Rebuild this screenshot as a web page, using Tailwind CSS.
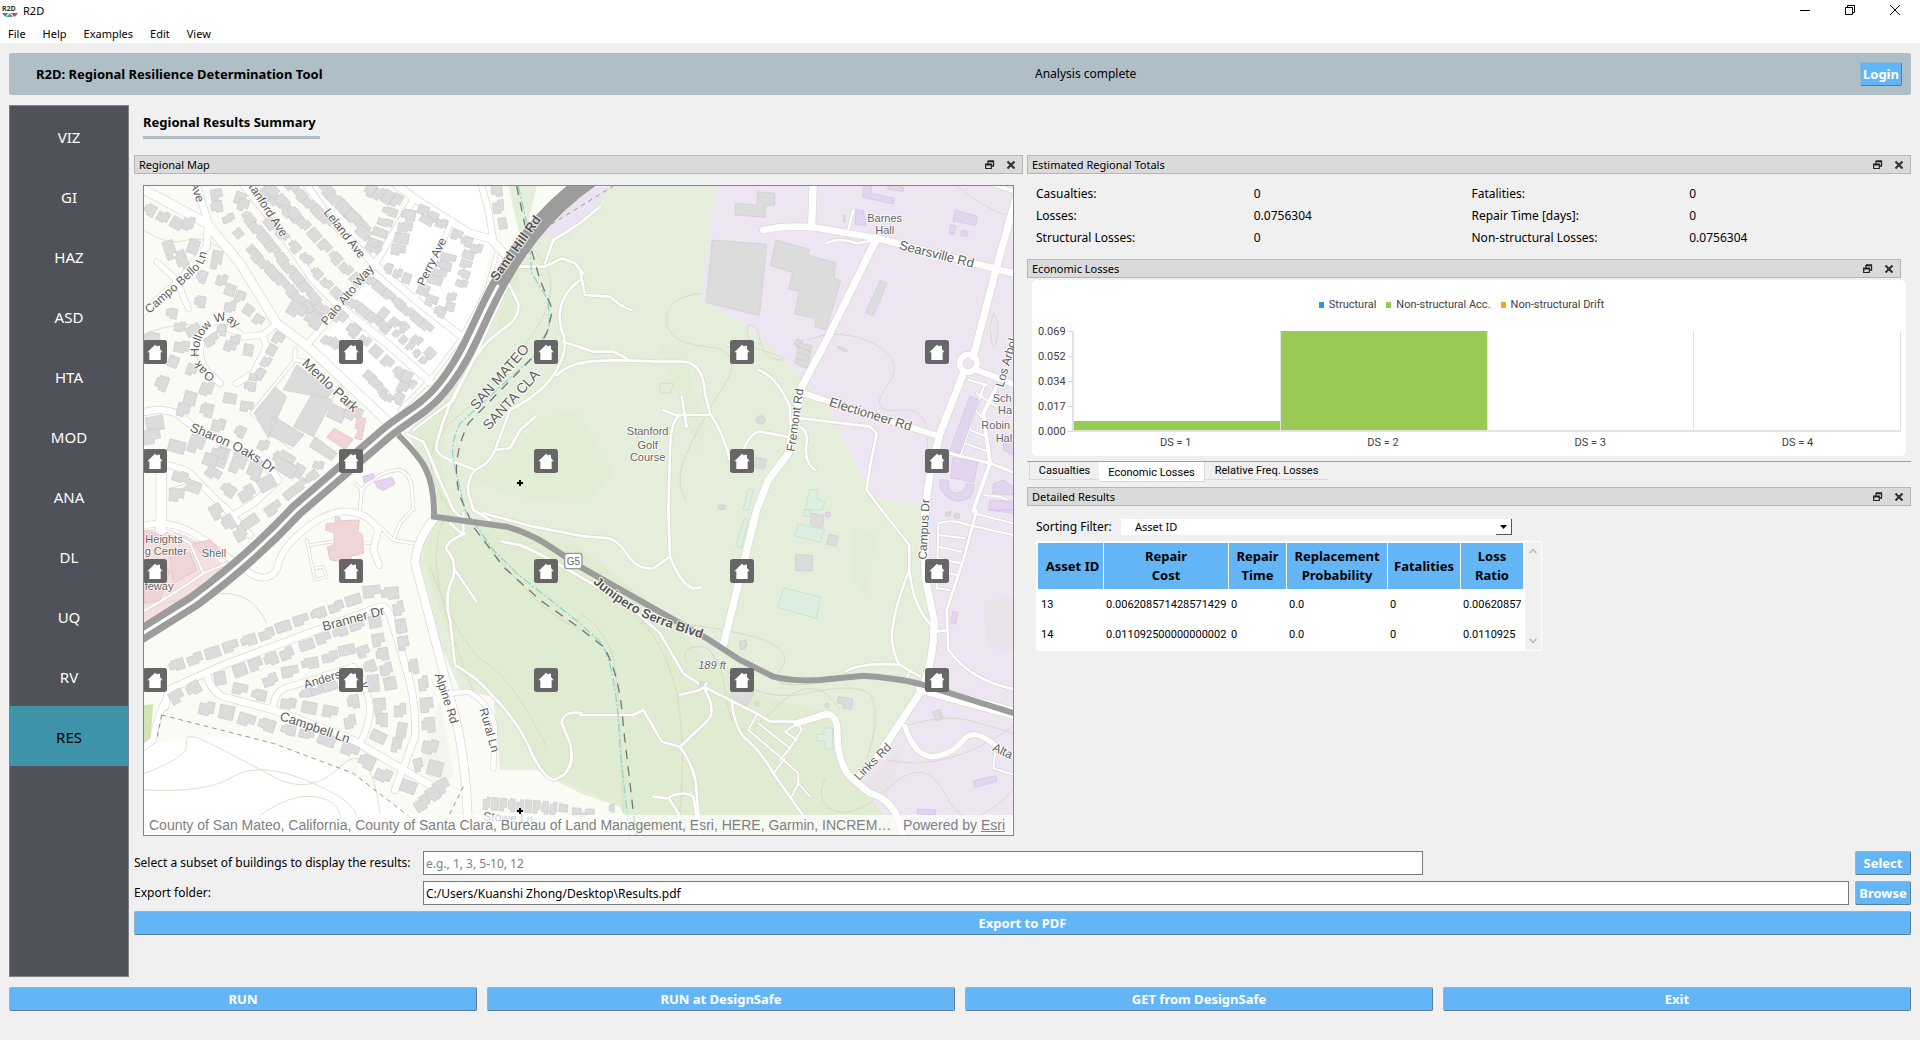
<!DOCTYPE html>
<html lang="en">
<head>
<meta charset="utf-8">
<title>R2D</title>
<script src="https://cdn.jsdelivr.net/npm/@tailwindcss/browser@4"></script>
</head>
<body class="min-h-screen bg-[#f0f0f0] font-['Noto_Sans',sans-serif] text-xs text-black">

<!-- Shared icons -->
<svg class="hidden" aria-hidden="true">
  <symbol id="float" viewBox="0 0 10 10"><path d="M3 4V1.5H8.500V6H6.500M3 1H9" fill="none" stroke="#222" stroke-width="1.300"/><path d="M.7 4.500H6.300V8.500H.7Z" fill="none" stroke="#222" stroke-width="1.200"/><path d="M0 4.500H7" stroke="#222" stroke-width="2"/></symbol>
  <symbol id="close" viewBox="0 0 10 10"><path d="M1.500 1.500 8.500 8.500M8.500 1.500 1.500 8.500" stroke="#333" stroke-width="2.200"/></symbol>
  <symbol id="house" viewBox="0 0 72 72"><rect width="72" height="72" rx="8" fill="#666"/><path d="M13 37 36 14 43 20V17H51V27L59 37H53V60H19V37Z" fill="#fff"/></symbol>
</svg>

<header class="bg-white h-[43px] flex flex-col">
  <div class="flex items-center h-[23px]">
    <svg class="ml-[2px] w-4 h-4" viewBox="0 0 16 16" aria-hidden="true"><text x="0" y="7" font-size="7" font-weight="bold" font-family="Noto Sans" fill="#333">R2D</text><path d="M0 9H6L3.500 13Z" fill="#3f7fc1"/><path d="M4 13 8 9 11 13Z" fill="#4fa79b"/><path d="M9 9H16L12.500 13Z" fill="#c9484b"/></svg>
    <span class="ml-[5px] text-[11px]">R2D</span>
    <div class="ml-auto flex items-start h-full pt-[5px] gap-[35px] pr-[20px]">
      <button aria-label="Minimize" class="w-[10px] h-[10px]"><svg viewBox="0 0 10 10"><path d="M0 5.500H10" stroke="#000"/></svg></button>
      <button aria-label="Restore" class="w-[10px] h-[10px]"><svg viewBox="0 0 10 10"><path d="M.5 2.500H7.500V9.500H.5ZM2.500 2.500V.5H9.500V7.500H7.500" fill="none" stroke="#000"/></svg></button>
      <button aria-label="Close" class="w-[10px] h-[10px]"><svg viewBox="0 0 10 10"><path d="M0 0 10 10M10 0 0 10" stroke="#000"/></svg></button>
    </div>
  </div>
  <nav class="flex items-center h-5 pt-[2px] pl-2 gap-[17px] text-[11px]">
    <a href="#file">File</a><a href="#help">Help</a><a href="#examples">Examples</a><a href="#edit">Edit</a><a href="#view">View</a>
  </nav>
</header>

<div class="px-[9px] pt-[10px]">
  <div class="h-[42px] rounded-xs bg-[#b0bec5] grid grid-cols-[1026fr_876fr] items-center">
    <h1 class="pl-[27px] pt-px text-[13px] font-bold">R2D: Regional Resilience Determination Tool</h1>
    <div class="flex items-center justify-between pr-[9px]">
      <span>Analysis complete</span>
      <button class="h-6 w-[42px] rounded-xs bg-[#64b5f6] border border-t-[#8cb9d0] border-l-[#8cb9d0] border-r-[#5a7f96] border-b-[#5a7f96] text-white font-bold text-[13px] leading-5">Login</button>
    </div>
  </div>

  <div class="flex mt-[10px] gap-[5px]">
    <nav class="w-[120px] shrink-0 bg-[#505259] border border-[#7f818a] text-[15px] text-white">
      <a href="#viz" class="flex h-[60px] pt-[2px] items-center justify-center">VIZ</a>
      <a href="#gi" class="flex h-[60px] pt-[2px] items-center justify-center">GI</a>
      <a href="#haz" class="flex h-[60px] pt-[2px] items-center justify-center">HAZ</a>
      <a href="#asd" class="flex h-[60px] pt-[2px] items-center justify-center">ASD</a>
      <a href="#hta" class="flex h-[60px] pt-[2px] items-center justify-center">HTA</a>
      <a href="#mod" class="flex h-[60px] pt-[2px] items-center justify-center">MOD</a>
      <a href="#ana" class="flex h-[60px] pt-[2px] items-center justify-center">ANA</a>
      <a href="#dl" class="flex h-[60px] pt-[2px] items-center justify-center">DL</a>
      <a href="#uq" class="flex h-[60px] pt-[2px] items-center justify-center">UQ</a>
      <a href="#rv" class="flex h-[60px] pt-[2px] items-center justify-center">RV</a>
      <a href="#res" aria-current="page" class="flex h-[60px] pt-[2px] items-center justify-center bg-[#3f93a9] text-black">RES</a>
    </nav>

    <main class="flex-1 min-w-0 pb-[42px]">
      <h2 class="ml-[9px] mt-2 w-[177px] h-[26px] border-b-[3px] border-[#b0bec5] text-[13px] leading-[18px] font-bold whitespace-nowrap">Regional Results Summary</h2>

      <div class="grid grid-cols-[889fr_884fr] gap-1 mt-4">
        <section>
          <div class="h-[19px] flex items-center border border-[#b5b5b5] bg-[#dadada] pl-1 pr-1.5 text-[11px]">
            <h3 class="pt-px">Regional Map</h3>
            <button aria-label="Float" class="ml-auto w-[10px] h-[10px]"><svg class="size-full"><use href="#float"/></svg></button>
            <button aria-label="Close" class="ml-[11px] w-[10px] h-[10px]"><svg class="size-full"><use href="#close"/></svg></button>
          </div>
          <div class="relative mx-[9px] mt-[11px] border border-[#85858c] overflow-hidden bg-[#fbfaf5]">
            <svg id="map" class="block w-full" viewBox="12 18 2607 1947" preserveAspectRatio="xMidYMid slice" font-family="'Liberation Sans', Arial, sans-serif" role="img" aria-label="Regional map"></svg>
            <div class="absolute inset-x-0 bottom-0 h-5 px-[5px] flex justify-between items-center bg-white/70 font-['Liberation_Sans',sans-serif] text-sm text-[#808080] whitespace-nowrap">
              <span class="truncate">County of San Mateo, California, County of Santa Clara, Bureau of Land Management, Esri, HERE, Garmin, INCREM…</span>
              <span class="pl-2 pr-[3px]">Powered by <a href="#esri" class="underline">Esri</a></span>
            </div>
          </div>
        </section>

        <section>
          <div class="h-[19px] flex items-center border border-[#b5b5b5] bg-[#dadada] pl-1 pr-1.5 text-[11px]">
            <h3 class="pt-px">Estimated Regional Totals</h3>
            <button aria-label="Float" class="ml-auto w-[10px] h-[10px]"><svg class="size-full"><use href="#float"/></svg></button>
            <button aria-label="Close" class="ml-[11px] w-[10px] h-[10px]"><svg class="size-full"><use href="#close"/></svg></button>
          </div>
          <dl class="grid grid-cols-4 pl-[9px] pr-1 pt-[9px] pb-[10px] leading-[22px]">
            <dt>Casualties:</dt><dd>0</dd><dt>Fatalities:</dt><dd>0</dd>
            <dt>Losses:</dt><dd>0.0756304</dd><dt>Repair Time [days]:</dt><dd>0</dd>
            <dt>Structural Losses:</dt><dd>0</dd><dt>Non-structural Losses:</dt><dd>0.0756304</dd>
          </dl>
          <div class="mr-[10px] h-[19px] flex items-center border border-[#b5b5b5] bg-[#dadada] pl-1 pr-1.5 text-[11px]">
            <h3 class="pt-px">Economic Losses</h3>
            <button aria-label="Float" class="ml-auto w-[10px] h-[10px]"><svg class="size-full"><use href="#float"/></svg></button>
            <button aria-label="Close" class="ml-[11px] w-[10px] h-[10px]"><svg class="size-full"><use href="#close"/></svg></button>
          </div>

          <div class="mt-[2px] ml-[5px] mr-[5px] h-44 rounded-[5px] bg-white pt-4 pl-[6px] pr-[5px] font-['Roboto',sans-serif] text-[11px] text-[#404044]">
            <div class="flex justify-center items-center gap-[10px] h-[18px] pr-4">
              <span class="flex items-center gap-[5px]"><i class="w-[5px] h-[6px] bg-[#209fdf]"></i>Structural</span>
              <span class="flex items-center gap-[5px]"><i class="w-[5px] h-[6px] bg-[#99ca53]"></i>Non-structural Acc.</span>
              <span class="flex items-center gap-[5px]"><i class="w-[5px] h-[6px] bg-[#f6a625]"></i>Non-structural Drift</span>
            </div>
            <div class="flex mt-[10px]">
              <div class="w-[30px] flex flex-col justify-between h-[115px] leading-[15px]">
                <span>0.069</span><span>0.052</span><span>0.034</span><span>0.017</span><span>0.000</span>
              </div>
              <div class="w-1 h-[101px] mt-[7px] flex flex-col justify-between">
                <i class="h-px bg-[#d6d6d6]"></i><i class="h-px bg-[#d6d6d6]"></i><i class="h-px bg-[#d6d6d6]"></i><i class="h-px bg-[#d6d6d6]"></i><i class="h-px bg-[#d6d6d6]"></i>
              </div>
              <div class="flex-1 mt-[7px]">
                <div class="grid grid-cols-4 h-[101px] border-l-2 border-b-2 border-[#e2e2e2]">
                  <div class="border-r border-[#e2e2e2] flex items-end"><div class="w-full bg-[#99ca53]" style="height:9px"></div></div>
                  <div class="border-r border-[#e2e2e2] flex items-end"><div class="w-full bg-[#99ca53]" style="height:99px"></div></div>
                  <div class="border-r border-[#e2e2e2]"></div>
                  <div class="border-r border-[#e2e2e2]"></div>
                </div>
                <div class="grid grid-cols-4 text-center pt-[3px] leading-4"><span>DS = 1</span><span>DS = 2</span><span>DS = 3</span><span>DS = 4</span></div>
              </div>
            </div>
          </div>

          <div class="mt-[5px] pl-[2px] flex items-start border-t border-[#a0a0a0] font-['Roboto',sans-serif] text-[11px] leading-[17px]" role="tablist">
            <button role="tab" class="w-[70px] h-[18px] border-l border-b border-[#d9d9d9]">Casualties</button>
            <button role="tab" aria-selected="true" class="w-[106px] h-5 bg-white border-r border-b border-[#d9d9d9] pt-px">Economic Losses</button>
            <button role="tab" class="w-[123px] h-[18px] border-b border-[#d9d9d9]">Relative Freq. Losses</button>
          </div>

          <div class="mt-[5px] h-[19px] flex items-center border border-[#b5b5b5] bg-[#dadada] pl-1 pr-1.5 text-[11px]">
            <h3 class="pt-px">Detailed Results</h3>
            <button aria-label="Float" class="ml-auto w-[10px] h-[10px]"><svg class="size-full"><use href="#float"/></svg></button>
            <button aria-label="Close" class="ml-[11px] w-[10px] h-[10px]"><svg class="size-full"><use href="#close"/></svg></button>
          </div>
          <div class="ml-[9px] mt-[13px] flex items-center h-4">
            <label for="sort" class="w-[85px]">Sorting Filter:</label>
            <div class="relative w-[391px] h-4 bg-white">
              <select id="sort" class="appearance-none block w-full h-4 pl-[14px] text-[11px] leading-4"><option>Asset ID</option></select>
              <span class="absolute right-0 top-0 w-4 h-4 border-r border-b border-[#555] flex items-center justify-center pointer-events-none"><svg class="w-[7px] h-1" viewBox="0 0 7 4"><path d="M0 0H7L3.500 4Z"/></svg></span>
            </div>
          </div>
          <div class="ml-[9px] mt-[6px] flex w-[506px] h-[110px] bg-white p-px">
            <div class="flex-1">
              <table class="table-fixed w-[487px] border-separate border-spacing-px text-[11px]">
                <colgroup><col class="w-[65px]"><col class="w-[124px]"><col class="w-[57px]"><col class="w-[100px]"><col class="w-[72px]"><col class="w-[62px]"></colgroup>
                <thead class="text-[13px] leading-[19px]">
                  <tr class="h-[46px] bg-[#64b5f6]"><th class="pl-1">Asset ID</th><th>Repair<br>Cost</th><th>Repair<br>Time</th><th>Replacement<br>Probability</th><th>Fatalities</th><th>Loss<br>Ratio</th></tr>
                </thead>
                <tbody class="font-['Roboto',sans-serif]">
                  <tr class="h-[29px]"><td class="pl-[3px] pt-px">13</td><td class="pl-[2px] pt-px">0.006208571428571429</td><td class="pl-[2px] pt-px">0</td><td class="pl-[2px] pt-px">0.0</td><td class="pl-[2px] pt-px">0</td><td class="pl-[2px] pt-px">0.00620857</td></tr>
                  <tr class="h-[29px]"><td class="pl-[3px] pt-px">14</td><td class="pl-[2px] pt-px">0.011092500000000002</td><td class="pl-[2px] pt-px">0</td><td class="pl-[2px] pt-px">0.0</td><td class="pl-[2px] pt-px">0</td><td class="pl-[2px] pt-px">0.0110925</td></tr>
                </tbody>
              </table>
            </div>
            <div class="w-4 bg-[#f0f0f0] flex flex-col items-center justify-between py-[6px]">
              <svg class="w-2 h-[6px]" viewBox="0 0 8 6"><path d="M.7 5 4 1.500 7.300 5" fill="none" stroke="#bbb" stroke-width="1.600"/></svg>
              <svg class="w-2 h-[6px]" viewBox="0 0 8 6"><path d="M.7 1 4 4.500 7.300 1" fill="none" stroke="#bbb" stroke-width="1.600"/></svg>
            </div>
          </div>
        </section>
      </div>

      <form class="mt-[15px] flex flex-col gap-[6px]">
        <div class="flex items-center h-6">
          <label for="subset" class="w-[289px] shrink-0">Select a subset of buildings to display the results:</label>
          <div class="flex-1 pr-[6px]"><input id="subset" placeholder="e.g., 1, 3, 5-10, 12" class="block w-[calc(70%+2px)] h-6 px-[2px] bg-white border border-[#7a7a7a] placeholder:text-[#808080]"></div>
          <button type="button" class="w-[56px] h-6 rounded-xs bg-[#64b5f6] border border-t-[#8cb9d0] border-l-[#8cb9d0] border-r-[#5a7f96] border-b-[#5a7f96] text-white font-bold text-[13px] leading-5">Select</button>
        </div>
        <div class="flex items-center h-6">
          <label for="folder" class="w-[289px] shrink-0">Export folder:</label>
          <div class="flex-1 pr-[6px]"><input id="folder" value="C:/Users/Kuanshi Zhong/Desktop\Results.pdf" class="block w-full h-6 px-[2px] bg-white border border-[#7a7a7a]"></div>
          <button type="button" class="w-[56px] h-6 rounded-xs bg-[#64b5f6] border border-t-[#8cb9d0] border-l-[#8cb9d0] border-r-[#5a7f96] border-b-[#5a7f96] text-white font-bold text-[13px] leading-5">Browse</button>
        </div>
        <button type="button" class="h-6 rounded-xs bg-[#64b5f6] border border-t-[#8cb9d0] border-l-[#8cb9d0] border-r-[#5a7f96] border-b-[#5a7f96] text-white font-bold text-[13px] leading-5">Export to PDF</button>
      </form>
    </main>
  </div>

  <footer class="mt-[10px] grid grid-cols-4 gap-[10px] pb-6">
    <button class="h-6 rounded-xs bg-[#64b5f6] border border-t-[#8cb9d0] border-l-[#8cb9d0] border-r-[#5a7f96] border-b-[#5a7f96] text-white font-bold text-[13px] leading-5">RUN</button>
    <button class="h-6 rounded-xs bg-[#64b5f6] border border-t-[#8cb9d0] border-l-[#8cb9d0] border-r-[#5a7f96] border-b-[#5a7f96] text-white font-bold text-[13px] leading-5">RUN at DesignSafe</button>
    <button class="h-6 rounded-xs bg-[#64b5f6] border border-t-[#8cb9d0] border-l-[#8cb9d0] border-r-[#5a7f96] border-b-[#5a7f96] text-white font-bold text-[13px] leading-5">GET from DesignSafe</button>
    <button class="h-6 rounded-xs bg-[#64b5f6] border border-t-[#8cb9d0] border-l-[#8cb9d0] border-r-[#5a7f96] border-b-[#5a7f96] text-white font-bold text-[13px] leading-5">Exit</button>
  </footer>
</div>

<script>
// Map units are a third of a pixel; the map is split in four tiles: NW, NE, SW, SE.
const TILE = [[0, 0], [1320, 0], [0, 990], [1320, 990]];
const out = [];
const add = s => out.push(s);
const tile = (i, s) => `<g transform="translate(${TILE[i]})">${s}</g>`;

// Land cover
add('<path d="M12 18H2619V1965H12Z" fill="#fbfbf6"/>');
add('<path d="M820 18H1040L1060 170L1000 420L870 590L740 740L520 520L720 260L830 60Z" fill="#fff"/>');
add('<path d="M12 1700Q200 1640 420 1700T800 1900V1965H12Z" fill="#fff"/><path d="M900 1560L940 1780L900 1860L840 1740Z" fill="#f5f4f0"/>');
add('<path d="M1105 18H1190L1160 150L1290 165L1350 100L1410 18H1728L1685 355L1800 420L1985 590L2070 690L2120 800L2200 950L2360 980L2380 1320L2345 1530L2160 1820L2290 1965H1485L1440 1880L1320 1840L1190 1770L1080 1770L1060 1550L960 1530L870 1320L830 1140L870 1040L900 990L870 880L800 760L960 600L1000 480L1100 270L1140 170Z" fill="#e4eeda"/>');
add('<path d="M1150 170L1120 400L1010 540L930 700L900 830L940 1010L1000 1030L1320 1100L1440 1200L1600 1320L1700 1450L1900 1560L2080 1600L2100 1750L2230 1900L2290 1965H1500L1440 1880L1200 1770L1080 1560L960 1480L850 1140L880 1040L900 860L830 760L960 620L1060 470Z" fill="#deebcd" opacity=".75"/>');
add('<path d="M1250 700H1320L1420 880L1340 970L1130 950L990 900Z M1560 500H1640L1660 640L1700 720L1680 820L1640 720Z M2130 1040L2210 1060L2180 1260L2140 1200Z" fill="#dcebc8" opacity=".35"/>');
add('<path d="M1200 170L1340 20H1410L1350 100L1290 165Z" fill="#ebe3f2"/>');
add('<path d="M1728 18H2619V1965H2290L2160 1820L2345 1530L2380 1320L2360 980L2200 950L2120 800L2070 690L1985 590L1800 420L1682 355Z" fill="#ede6f2"/>');
add('<path d="M2530 1260L2619 1250V1420L2540 1400Z M2160 1820L2290 1700L2240 1860Z" fill="#eae4ea"/>');
add('<path d="M12 1050Q130 1040 200 1110L290 1190L160 1250L12 1330Z" fill="#f4e0e0"/>');
add('<path d="M12 1575L40 1572L30 1690L12 1690Z" fill="#cfe6b4"/>');

// Contour lines
const contours = [
  'M12 1290Q160 1240 250 1240T380 1330', 'M12 1780Q150 1730 140 1690T210 1690T400 1790T600 1760T720 1900', 'M12 1830Q200 1840 280 1790T520 1810T640 1930',
  'M300 1960Q420 1840 520 1850T600 1960', 'M360 1960Q460 1880 540 1960', 'M1685 340Q1580 350 1580 420T1700 500T1750 620T1640 820T1640 960', 'M1820 440Q1850 420 1860 480T1920 540T1830 500Z',
  'M2000 480Q2100 440 2200 490T2240 620T2280 690T2360 820', 'M1320 1300Q1420 1360 1430 1500T1450 1900', 'M1460 1280Q1560 1360 1600 1500T1620 1900', 'M1500 1330Q1620 1320 1800 1360T1920 1470T2100 1500',
  'M1700 1400Q1820 1580 2000 1540T2200 1560T2180 1740', 'M1640 1450Q1620 1400 1680 1400T1760 1560T1900 1590T2100 1590', 'M2260 1650Q2400 1600 2480 1620T2619 1660', 'M2240 1740Q2420 1780 2619 1640',
  'M2060 1790Q2020 1860 2080 1890T2250 1820T2420 1850T2619 1830', 'M870 1160Q960 1400 1040 1450T1220 1700', 'M1020 1060Q1180 1290 1320 1350', 'M1170 200Q1290 300 1180 460T940 720T930 990',
  'M2450 18Q2500 60 2560 90T2619 90', 'M2560 400Q2580 420 2570 480T2550 440Z', 'M12 150Q80 200 140 180T300 250', 'M20 460Q120 420 200 440', 'M920 1000Q870 1090 900 1230T1010 1560', 'M1560 610H1600L1590 640L1560 635Z'];
add(`<g fill="none" stroke="#d8d4bc" stroke-width="3" opacity=".75">${contours.map(d => `<path d="${d}"/>`).join('')}</g>`);

// Streets: [tile, width, path]
const roads = [
  [0,26,'M0 22L200 130L300 250L410 430L510 505L600 590L770 750'],[0,20,'M165 0L205 130L200 200L120 300L0 405'],[0,16,'M50 245L110 300L145 385'],
  [0,22,'M300 0L420 150L520 300L600 380L740 490L870 605'],[0,20,'M490 0L580 130L690 240L820 355L965 470'],[0,18,'M505 490L600 380L700 260L820 60'],
  [0,22,'M750 0L830 60L990 160L1050 175L1110 240'],[0,18,'M1020 0L1045 90L1060 180'],[0,14,'M830 350L900 210L935 120'],[0,10,'M1070 220L1040 330L960 480L870 600L780 690'],
  [0,18,'M410 430L370 465L310 470Q250 420 200 460Q160 520 200 570L240 610'],[0,18,'M370 470L380 500L340 580L290 610'],[0,10,'M465 510V540L500 545'],[0,8,'M465 540L335 700L450 800L600 620'],
  [0,20,'M0 700Q60 680 110 700L160 740L280 800L390 870L415 900L340 970L290 1000'],[0,18,'M0 850Q110 850 150 880L260 990L330 1065'],[0,30,'M64 870V1050'],[0,8,'M90 930Q150 920 160 890'],
  [0,8,'M660 990L665 930Q720 870 780 870Q810 880 815 920L820 990'],[0,6,'M665 930L645 910'],[0,8,'M800 762L850 785Q880 850 890 880L940 990L980 1030'],
  [0,8,'M1110 260H1215L1265 235L1305 250L1330 280'],[0,8,'M1380 80L1320 130L1240 180L1215 250'],[0,8,'M1320 300Q1240 360 1265 450Q1290 500 1250 570Q1210 640 1110 690L1065 810Q1050 850 1005 870Q980 900 985 940L1000 990L1050 1020'],
  [0,8,'M1105 310L1135 370Q1140 410 1100 440Q1020 490 980 580Q920 670 890 790Q880 820 930 840L1005 870'],[0,8,'M1065 810L1110 805L1140 750L1185 710'],[0,8,'M1270 485L1330 505'],[0,8,'M1250 585Q1290 550 1330 550'],[0,8,'M1125 250L1100 320L1000 540L940 660L820 750'],
  [1,22,'M700 0L695 140'],[1,20,'M550 150Q620 135 700 142L890 175L1320 285'],[1,22,'M890 175L740 480L665 620L625 820L565 900L530 990L430 1395'],
  [1,22,'M1320 10L1250 260L1180 530'],[1,12,'M1230 10L1320 40'],[1,22,'M1150 580L1080 760L1050 880L1035 990V1190L1062 1320Q1065 1430 1025 1530L900 1720L830 1800'],[1,18,'M670 640L1080 770'],[1,18,'M1190 570L1320 620'],
  [1,8,'M820 90L805 150'],[1,8,'M740 190Q770 170 830 190L890 180'],[1,8,'M640 712L870 740L890 760L870 860L860 930L905 990L988 1095V1170Q940 1290 935 1370Q940 1430 960 1455L1020 1490'],
  [1,8,'M640 735Q690 740 678 800Q675 850 705 870'],[1,8,'M535 570Q590 590 630 680V735'],[1,8,'M620 770L540 755Q510 760 490 810'],[1,8,'M-5 500L40 515H100L140 535'],[1,8,'M-5 550Q60 535 230 545H310Q370 550 375 640L390 700Q430 760 450 840'],
  [1,8,'M250 690L285 705H390'],[1,8,'M305 650L320 740'],[1,8,'M300 705Q270 720 270 820L265 990'],[1,8,'M0 270L15 345L90 350Q120 380 155 390'],[1,12,'M1250 620L1210 700L1230 850L1180 990'],
  [1,6,'M1215 610L1190 680L1140 830'],[1,6,'M1165 600L1220 615M1190 640L1250 680M1185 690L1215 720M1170 750L1220 770M1155 790L1225 815'],[1,8,'M1110 820L1230 850L1320 885'],[1,6,'M1210 945L1260 950L1320 980'],
  [2,18,'M0 50Q100 20 190 90L330 190Q380 220 410 180Q420 120 480 70Q540 15 600 5Q680 0 715 60L700 120L718 165'],[2,16,'M255 -10L330 75'],[2,16,'M60 0L55 60'],[2,6,'M0 310Q120 240 190 190L150 100L60 50'],[2,6,'M190 190L260 160M150 60L205 90'],
  [2,8,'M720 50L760 90L780 40L820 -5'],[2,8,'M760 90L820 100'],[2,6,'M500 90L525 210L560 200L550 170L525 175'],[2,6,'M510 105L610 90L690 100'],
  [2,24,'M880 30Q830 90 825 160L870 330L940 600Q980 740 985 980'],[2,20,'M75 590L85 540L250 465L720 290Q745 290 755 330L800 480Q830 580 825 680L765 840'],[2,18,'M72 580Q45 640 40 690L0 720'],
  [2,20,'M200 495Q215 545 250 560L400 600L620 680L870 825'],[2,18,'M400 600Q400 540 450 530L640 470Q670 500 685 560Q700 620 665 690'],[2,14,'M930 550L985 545Q1050 580 1065 650L1060 775'],[2,14,'M1200 940L1260 885'],
  [2,8,'M1085 95L1140 105Q1200 130 1320 200L1470 290L1560 370L1630 490L1690 530L1850 610L1890 635H1970'],[2,8,'M930 40L970 75V10'],[2,8,'M975 70Q910 100 920 120Q950 150 940 200Q910 260 930 330L945 465Q1010 500 1060 560Q1140 640 1180 740Q1210 800 1240 810Q1310 790 1290 700L1265 640Q1270 600 1325 610'],
  [2,8,'M945 180L1010 275'],[2,8,'M1030 10L1180 50L1325 78'],
  [3,8,'M0 78L90 85Q120 100 140 130Q170 180 220 175L270 140L265 0'],[3,8,'M270 140Q300 220 340 235L365 233'],[3,20,'M650 640L740 612Q775 615 772 680Q775 760 810 800L870 850Q950 870 970 980'],
  [3,8,'M455 570Q460 640 490 680Q540 720 580 790L700 960'],[3,6,'M530 615L505 660L600 740L655 790V820L690 860'],[3,6,'M535 640L630 715L665 660L655 640L615 665L650 690'],[3,6,'M615 745L580 790M630 715L600 750M655 820L635 860'],
  [3,8,'M300 555L360 540L380 520'],[3,8,'M370 530Q410 600 385 630L300 710L245 695L190 600L160 615H0'],[3,8,'M300 710Q350 780 350 850L360 970'],[3,8,'M220 860L260 865Q310 840 340 860L350 920M270 870L295 910V960'],
  [3,8,'M988 180Q1000 290 1050 342'],[3,8,'M795 485Q850 455 960 465'],[3,6,'M990 480L980 505'],[3,34,'M1025 535L1310 612'],[3,16,'M975 650Q1000 730 1050 740Q1110 740 1150 690Q1180 650 1250 710L1320 750'],
  [3,8,'M1190 0L1150 150L1100 300L1105 420Q1180 520 1320 540M1070 365L1105 360'],[3,6,'M1075 40L1070 235L1110 240M1075 40Q1120 25 1165 45L1320 80M1180 10L1320 45M1075 75L1155 85M1075 110L1145 125M1072 145L1140 160M1072 180L1130 195'],[3,6,'M1245 730L1240 775L1320 800']];
add(`<g fill="none" stroke-linejoin="round" stroke-linecap="round" stroke="#d9d6cd">${roads.map(([t,w,d]) => tile(t, `<path d="${d}" stroke-width="${w + 4}"/>`)).join('')}<circle cx="2485" cy="550" r="26" stroke-width="22"/></g>`);
add(`<g fill="none" stroke-linejoin="round" stroke-linecap="round" stroke="#fff">${roads.map(([t,w,d]) => tile(t, `<path d="${d}" stroke-width="${w}"/>`)).join('')}<circle cx="2485" cy="550" r="26" stroke-width="18"/></g>`);

// Building footprints
const SHAPES = [
  (w,h) => `M0 0H${w}V${h}H0Z`,
  (w,h) => `M0 0H${w}V${h*.7}H${w*.6}V${h}H0Z`,
  (w,h) => `M${w*.2} 0H${w}V${h}H${w*.4}V${h*.8}H0V${h*.2}H${w*.2}Z`,
  (w,h) => `M0 ${h*.2}H${w*.5}V0H${w}V${h*.8}H${w*.7}V${h}H0Z`];
let n = 0;
const house = (x, y, w, h, r) => { const s = SHAPES[n++ % 4](w, h); return `<path d="${s}" transform="translate(${x} ${y}) rotate(${r}) translate(${-w/2} ${-h/2})"/>`; };
// Rows: [tile, x1, y1, x2, y2, count, w, h, angle]
const rows = [
  [0,295,160,335,210,2,26,26,50],[0,345,225,530,410,8,40,32,50],[0,325,115,545,385,10,42,32,50],[0,390,130,500,235,4,36,30,50],[0,380,40,470,115,4,40,34,50],[0,395,30,650,300,9,38,32,48],[0,455,20,560,120,5,36,32,48],[0,560,30,665,140,5,46,36,48],[0,640,110,700,205,3,44,32,40],
  [0,690,30,770,62,4,28,40,30],[0,750,95,705,190,4,44,24,20],[0,805,105,775,210,4,42,32,10],[0,745,265,800,295,3,24,30,20],[0,850,90,905,130,3,34,28,20],[0,860,120,860,120,1,40,24,30],[0,925,235,885,300,4,44,26,15],[0,950,165,1010,205,3,32,30,20],[0,985,225,965,310,4,34,24,20],
  [0,850,330,900,395,3,34,32,20],[0,935,350,930,380,2,26,26,15],[0,230,45,230,80,2,34,34,-10],[0,265,115,265,115,1,36,24,-20],[0,300,55,310,75,2,30,36,20],[0,530,280,590,340,3,34,28,45],
  [0,600,410,640,450,2,38,40,40],[0,640,370,730,440,4,42,30,40],[0,690,300,860,440,7,38,28,40],[0,790,440,870,520,3,30,30,45],[0,470,390,520,420,2,52,44,30],[0,560,480,610,500,3,26,30,40],[0,640,450,810,610,6,34,32,42],[0,690,590,740,650,4,38,26,40],[0,800,590,775,655,3,30,34,25],[0,770,460,850,540,5,20,24,40],[0,730,400,760,430,2,26,34,40],
  [0,30,90,110,130,3,34,34,30],[0,90,210,125,240,2,32,56,-20],[0,145,130,160,200,2,32,42,20],[0,230,240,230,240,1,30,56,10],[0,185,290,245,300,2,30,36,20],[0,270,330,300,350,2,30,34,20],[0,180,365,270,380,2,32,34,10],[0,325,390,355,420,2,30,30,35],
  [0,95,400,120,440,2,32,30,10],[0,160,450,215,480,2,44,28,-30],[0,245,450,325,510,3,28,34,10],[0,270,500,270,500,1,34,30,20],[0,35,475,125,500,2,44,36,10],[0,100,545,155,570,2,30,34,20],[0,65,610,200,625,2,36,44,20],[0,150,655,130,690,2,36,40,15],[0,200,690,235,735,2,38,40,15],[0,270,655,320,680,2,38,30,10],[0,330,620,345,590,2,34,26,10],
  [0,45,730,35,770,2,52,42,-10],[0,360,580,395,510,3,26,32,30],[0,415,475,415,475,1,32,34,30],[0,300,755,370,795,2,30,34,25],[0,110,800,110,800,1,50,36,15],[0,170,790,240,830,2,44,60,20],[0,235,820,210,840,2,40,36,20],[0,295,850,345,870,2,42,62,20],[0,120,890,160,920,2,44,34,20],[0,220,880,265,930,2,44,34,35],[0,320,940,380,910,2,50,40,-30],[0,110,945,110,945,1,44,38,5],
  [0,430,840,460,870,2,60,50,30],[0,450,940,515,890,3,40,26,-40],[0,535,855,535,855,1,30,26,20],[0,590,700,640,700,2,50,42,25],[0,1070,30,1075,80,2,32,40,-5],[0,1088,130,1088,130,1,24,34,-10],
  [2,230,5,300,70,3,36,44,-30],[2,330,35,400,-5,2,52,30,-35],[2,110,465,380,372,6,46,32,-18],[2,430,350,640,270,5,46,30,-18],[2,695,245,750,250,2,52,36,-5],[2,775,295,790,400,3,32,42,-10],[2,820,470,850,520,2,28,44,-8],
  [2,300,480,440,430,4,40,36,-20],[2,500,405,650,345,4,44,30,-18],[2,705,335,705,335,1,36,36,-10],[2,715,390,750,520,4,36,38,-10],[2,450,485,510,460,2,50,32,-10],[2,570,440,620,420,2,48,30,-12],[2,670,425,690,470,2,36,34,-20],[2,390,510,390,510,1,44,34,-20],
  [2,240,505,240,505,1,34,38,-10],[2,300,537,357,555,2,44,32,12],[2,200,595,260,607,2,44,42,12],[2,320,630,380,645,2,50,36,18],[2,445,580,570,605,3,44,34,12],[2,445,660,500,670,2,44,30,12],[2,560,690,630,720,2,52,34,20],[2,680,755,730,795,2,48,40,25],[2,700,520,720,590,2,34,50,-5],[2,725,630,780,600,2,34,40,0],
  [2,785,660,770,705,2,28,44,10],[2,640,575,630,635,2,34,40,-10],[2,715,680,715,680,1,46,32,25],[2,860,585,865,645,2,38,44,-5],[2,870,710,885,775,2,44,44,15],[2,905,830,845,880,3,46,40,-30],[2,805,830,805,830,1,46,36,20],[2,835,765,835,765,1,26,38,-15],[2,500,550,570,530,3,44,24,-18],[2,110,560,160,535,2,42,38,-30],
  [2,1040,880,1240,895,9,20,38,4],[2,1270,895,1310,905,2,26,22,5],
  [1,655,490,655,490,1,22,24,25],[1,675,500,665,550,4,40,18,20],[3,1105,12,1130,18,2,16,14,0],[3,490,405,510,412,1,20,26,-10],[3,95,895,95,895,1,16,24,0],[3,10,915,30,905,2,26,16,0]];
add('<g fill="#dcdcdc" stroke="#cbcbcb" stroke-width="2">');
for (const [t,x1,y1,x2,y2,c,w,h,r] of rows) {
  let s = '';
  for (let i = 0; i < c; i++) { const k = c > 1 ? i / (c - 1) : 0; s += house(Math.round(x1 + (x2 - x1) * k), Math.round(y1 + (y2 - y1) * k), w, h, r); }
  add(tile(t, s));
}
// Large blocks
add(tile(0, '<path d="M405 620L440 650L385 775L342 700ZM470 555L580 630L560 655L430 630ZM520 635L578 660L520 770L460 740ZM400 708L492 765L460 800L385 765ZM525 770L592 820L575 842L508 800ZM400 820L475 865L450 895L410 870Z"/>'));
add(tile(1, '<path d="M397 180L560 193L538 407L378 367ZM588 180L688 208L685 225L767 248L762 292L782 303L738 450L706 440V415L643 402L658 335L626 327L638 278L571 256ZM466 70L532 76V35L584 40V75L556 78V112L466 105ZM900 302L922 310L880 407L856 398ZM775 498L803 510L800 516L772 504Z"/><circle cx="542" cy="720" r="13"/><path d="M528 832L560 838L553 868L522 862ZM415 975H435V988H415ZM790 104H796V126H790Z"/>'));
add(tile(3, '<path d="M646 133L698 136V183L646 182ZM694 10L732 15L728 55L690 45ZM748 72L776 80L768 108L740 103ZM462 540L523 548L500 588L448 560ZM775 560L818 566L815 598L790 595L788 580H773ZM1058 605L1080 598L1090 625L1068 633Z"/><circle cx="741" cy="587" r="7"/><circle cx="365" cy="522" r="7"/><circle cx="531" cy="582" r="6"/>'));
add('</g>');
add('<g fill="#f0d5d6" stroke="#e0bcbc" stroke-width="2">' + tile(0, '<path d="M582 745L640 778L615 808L560 772ZM652 712L678 716L664 780L644 774L655 750L645 744Z"/>') + tile(2, '<path d="M586 20L600 22V32L658 30L654 65L668 75L670 130L635 138L632 158L570 150L562 112L582 104V68L556 60L560 40L586 40ZM12 60L70 80L60 100L12 95ZM90 120L150 130L170 180L100 220L90 150ZM12 150L90 180L60 270L12 280ZM160 100L210 90L240 120L190 140Z"/>') + '</g>');
add('<g fill="#e3d5ef" stroke="#d3c0e2" stroke-width="2">' + tile(0, '<path d="M703 905L757 892L765 912L730 932L712 922ZM668 890L700 880L704 895L672 908Z"/>') +
  tile(1, '<path d="M850 18H875V40L943 55L940 72L848 52ZM920 10L970 22V35L925 28ZM828 88L850 92L858 138L825 132ZM1125 90L1160 100L1192 108L1188 136L1120 124ZM1112 134L1127 138L1122 164L1108 160ZM1145 150L1165 155L1160 170L1142 166ZM1170 648L1198 660L1140 820L1110 810ZM1118 833L1193 845L1182 907L1112 893ZM1080 898L1105 902Q1100 935 1130 940Q1160 935 1160 910L1183 914Q1180 965 1130 964Q1075 950 1080 898ZM1240 912L1270 900L1300 920V945L1238 940ZM1230 960L1320 965V990H1225ZM1270 770L1300 765V825L1270 810Z"/>') +
  tile(3, '<path d="M1118 305L1133 308L1128 343L1113 338ZM1180 812L1248 797L1250 815L1184 832ZM1012 897L1068 900L1066 916L1012 912ZM1225 0H1300V10Z"/><circle cx="744" cy="14" r="8"/>') + '</g>');
add('<g fill="#dcefe0" stroke="#b9dcd2" stroke-width="2">' + tile(1, '<path d="M505 926L521 930L505 990H490ZM688 928L712 930V958L734 965L728 990H676Z"/>') + tile(3, '<path d="M654 42L733 60L720 97L643 78ZM492 25L505 30L484 114L467 108ZM610 233L722 262L709 325L592 292ZM672 0H692L688 20L668 16ZM732 654H758V718H735V694L708 690L712 674L732 672Z"/>') + '</g>');

// Trails and county line
add('<g fill="none" stroke-width="4"><path d="M1135 18L1165 150L1175 280L1225 360L1228 440L1180 530L960 730Q925 800 945 860L975 990L1060 1110L1130 1180L1320 1330L1385 1390Q1430 1470 1440 1700L1468 1965" stroke="#8fd6d2" stroke-dasharray="26 7 6 7"/>' +
  '<path d="M1130 18L1160 160L1200 300L1238 390L1220 460L1180 530L985 730Q930 840 960 950L1000 1040L1090 1160L1200 1260L1320 1345L1390 1400Q1440 1480 1450 1640L1488 1965" stroke="#777" stroke-dasharray="28 22"/></g>');
add('<g fill="none" stroke="#999" stroke-width="3" stroke-dasharray="14 12"><path d="M65 1605L400 1690L640 1780L860 1950M65 1605L50 1680M970 1820L920 1920"/><path d="M1190 160L1420 18"/></g>');

// Arterials
add('<g fill="none" stroke="#9c9c9c"><path d="M1400 -40L1300 35Q1170 140 1080 305C1010 430 985 530 900 630C850 690 790 715 740 758L470 990Q330 1140 160 1265L-20 1378" stroke-width="52"/><path d="M775 765C850 840 880 880 882 990V1010L1100 1040C1190 1065 1230 1100 1320 1160L1700 1375L1800 1440L1900 1490Q1960 1505 2040 1500L2170 1487Q2280 1495 2340 1512L2640 1605" stroke-width="18"/></g>');
add('<path d="M1075 315C1010 430 985 530 900 630C850 690 790 715 740 758L470 990Q330 1140 160 1265L-20 1378" fill="none" stroke="#fff" stroke-width="9"/>');

// Labels
add('<defs><path id="p1" d="M28 402L110 330L175 270Q205 240 202 180V120"/><path id="p2" d="M226 585Q150 550 190 465Q225 415 262 424L350 500"/><path id="p3" d="M1070 305L1225 90"/><path id="p4" d="M1358 1208Q1450 1290 1540 1325T1740 1392"/><path id="p5" d="M148 752L250 795Q330 830 400 885"/></defs>');
add('<g font-size="36" fill="#5c5c5c" stroke="#fff" stroke-width="6" stroke-linejoin="round" paint-order="stroke" stroke-opacity=".85">');
const label = (x, y, r, s, extra = 'text-anchor="middle"') => add(`<text transform="translate(${x} ${y}) rotate(${r})" dominant-baseline="central" ${extra}>${s}</text>`);
label(172, 36, 72, 'Ave'); label(378, 80, 57, 'Stanford Ave'); label(614, 160, 52, 'Leland Ave'); label(875, 245, -64, 'Perry Ave'); label(622, 345, -50, 'Palo Alto Way');
label(572, 615, 43, 'Menlo Park', 'text-anchor="middle" font-size="42"'); label(1078, 590, -49, 'SAN MATEO', 'text-anchor="middle" font-size="42"'); label(1035, 742, -47, 'SANTA CLA', 'font-size="42"');
label(2390, 222, 14, 'Searsville Rd', 'text-anchor="middle" font-size="39"'); label(2192, 702, 17, 'Electioneer Rd', 'text-anchor="middle" font-size="39"'); label(1965, 720, -82, 'Fremont Rd'); label(2352, 1048, -87, 'Campus Dr'); label(2578, 620, -74, 'Los Arbol', '');
label(640, 1315, -15, 'Branner Dr', 'text-anchor="middle" font-size="39"'); label(566, 1492, -17, 'Anderson'); label(676, 1515, 70, 'y'); label(525, 1642, 19, 'Campbell Ln', 'text-anchor="middle" font-size="39"'); label(920, 1555, 72, 'Alpine Rd'); label(1048, 1650, 74, 'Rural Ln'); label(1105, 1914, 4, 'Stowe Ln'); label(2198, 1745, -45, 'Links Rd'); label(2560, 1700, 25, 'Alta', '');
add('<text><textPath href="#p1">Campo Bello Ln</textPath></text><text><textPath href="#p2">Oak Hollow Way</textPath></text><text font-size="39"><textPath href="#p5">Sharon Oaks Dr</textPath></text><g font-weight="bold" fill="#555" font-size="39"><text><textPath href="#p3">Sand Hill Rd</textPath></text><text><textPath href="#p4">Junipero Serra Blvd</textPath></text></g></g>');
add('<g font-size="33" fill="#666" stroke="#fff" stroke-width="5" paint-order="stroke" stroke-opacity=".8" text-anchor="middle"><text x="2234" y="125">Barnes</text><text x="2234" y="163">Hall</text><text x="1523" y="766">Stanford</text><text x="1523" y="806">Golf</text><text x="1523" y="843">Course</text><text x="1716" y="1468" font-style="italic">189 ft</text><text x="222" y="1131">Shell</text></g>');
add('<g font-size="33" fill="#666" stroke="#fff" stroke-width="5" paint-order="stroke" stroke-opacity=".8"><text x="16" y="1088">Heights</text><text x="14" y="1126">g Center</text><text x="14" y="1230">feway</text><text x="2558" y="666">Sch</text><text x="2574" y="702">Ha</text><text x="2524" y="746">Robin</text><text x="2567" y="786">Hal</text></g>');
add('<rect x="1274" y="1120" width="52" height="46" rx="8" fill="#fff" stroke="#999" stroke-width="4"/><text x="1300" y="1154" font-size="30" fill="#666" text-anchor="middle">G5</text>');

// Asset markers and reference crosses
for (const y of [516, 843, 1173, 1500]) for (const x of [45, 633, 1218, 1806, 2391]) add(`<use href="#house" x="${x - 36}" y="${y - 36}" width="72" height="72"/>`);
add('<path d="M1131 909H1149M1140 900V918M1131 1893H1149M1140 1884V1902" stroke="#000" stroke-width="6"/>');
document.getElementById('map').innerHTML = out.join('');
</script>
</body>
</html>
